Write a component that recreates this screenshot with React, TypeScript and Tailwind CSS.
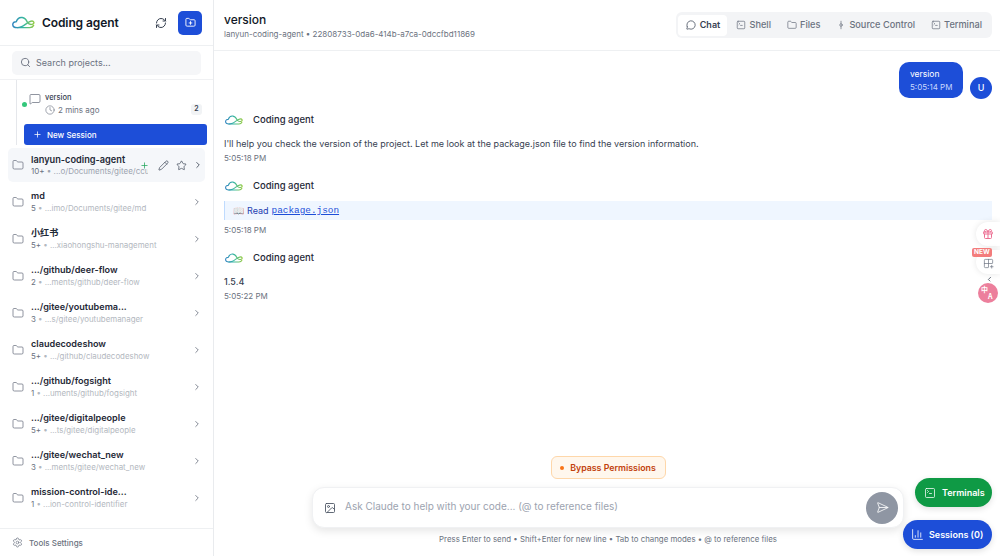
import { ChevronRight, Clock, Folder, FolderPlus, Image, MessageSquare, MessageCircle, Pencil, Plus, RefreshCw, Search, SendHorizontal, Settings, SquareTerminal, Star, GitCommitVertical, ChartColumn, Gift, Grid2x2Plus, ChevronLeft } from 'lucide-react';

const projects = [
  { name: 'md', count: '5', path: '...imo/Documents/gitee/md' },
  { name: '小红书', count: '5+', path: '...xiaohongshu-management' },
  { name: '.../github/deer-flow', count: '2', path: '...ments/github/deer-flow' },
  { name: '.../gitee/youtubema...', count: '3', path: '...s/gitee/youtubemanager' },
  { name: 'claudecodeshow', count: '5+', path: '.../github/claudecodeshow' },
  { name: '.../github/fogsight', count: '1', path: '...uments/github/fogsight' },
  { name: '.../gitee/digitalpeople', count: '5+', path: '...ts/gitee/digitalpeople' },
  { name: '.../gitee/wechat_new', count: '3', path: '...ments/gitee/wechat_new' },
  { name: 'mission-control-ide...', count: '1', path: '...ion-control-identifier' },
];

const tabs = [
  { label: 'Shell', icon: SquareTerminal },
  { label: 'Files', icon: Folder },
  { label: 'Source Control', icon: GitCommitVertical },
  { label: 'Terminal', icon: SquareTerminal },
];

function Logo({ className }: { className: string }) {
  return (
    <svg viewBox="0 0 36 20" fill="none" className={className}>
      <defs>
        <linearGradient id="cloud" x1="0" y1="0" x2="36" y2="0" gradientUnits="userSpaceOnUse">
          <stop offset="0" stopColor="#2f7fc1" />
          <stop offset="0.5" stopColor="#35b7a0" />
          <stop offset="1" stopColor="#9ccc3c" />
        </linearGradient>
      </defs>
      <path
        d="M8 18C3.5 18 1.2 15.6 1.2 13C1.2 10.4 3.6 8.6 6.6 8.8C8.2 4.2 12 1.6 16 2.2C20 2.8 22.5 6 24 9.5C26 12.5 28.5 13.5 31 13C33.5 12.5 34.8 11 34.2 9.5C33.4 7.8 30 7.6 27 9C22.5 11 19 15 15 16.5C12 17.6 9.5 18 8 18Z"
        stroke="url(#cloud)"
        strokeWidth="2.2"
        strokeLinejoin="round"
      />
      <path d="M8 18H28C30.5 18 32.8 16.8 33.8 14.5" stroke="url(#cloud)" strokeWidth="2.2" strokeLinecap="round" />
    </svg>
  );
}

function AgentHeader() {
  return (
    <div className="flex h-[16px] items-center gap-[10px] pl-[1px]">
      <Logo className="h-[10px] w-[18px]" />
      <span className="text-[9.5px] font-medium text-[#1f2937]">Coding agent</span>
    </div>
  );
}

export default function App() {
  return (
    <div className="relative flex h-[556px] w-[1000px] overflow-hidden bg-white font-['Inter',sans-serif] text-[#111827]">
      {/* Sidebar */}
      <aside className="flex w-[214px] shrink-0 flex-col border-r border-[#e9ebee] bg-white">
        <div className="flex h-[46px] shrink-0 items-center border-b border-[#eef0f2] pl-[12px] pr-[11px]">
          <Logo className="h-[13px] w-[23px]" />
          <span className="ml-[7px] flex-1 text-[12px] font-semibold tracking-[-0.1px] text-[#111827]">Coding agent</span>
          <RefreshCw className="mr-[11px] h-[12px] w-[12px] text-[#374151]" strokeWidth={2} />
          <div className="flex h-[24px] w-[24px] items-center justify-center rounded-[5px] bg-[#1d4ed8]">
            <FolderPlus className="h-[11px] w-[11px] text-white" strokeWidth={2} />
          </div>
        </div>

        <div className="flex h-[34px] shrink-0 items-center border-b border-[#f0f1f3] px-[12px]">
          <div className="flex h-[24px] w-full items-center gap-[5px] rounded-[5px] bg-[#f5f6f8] px-[8px]">
            <Search className="h-[11px] w-[11px] text-[#6b7280]" strokeWidth={2} />
            <span className="text-[9px] text-[#6b7280]">Search projects...</span>
          </div>
        </div>

        {/* Open project */}
        <div className="ml-[16px] mr-[6px] shrink-0 border-l border-[#e5e7eb] pt-[13px]">
          <div className="relative h-[31px] pl-[13px]">
            <span className="absolute left-[5px] top-[9px] h-[5px] w-[5px] rounded-full bg-[#34c77b]" />
            <MessageSquare className="absolute left-[12px] top-[0px] h-[12px] w-[12px] text-[#6b7280]" strokeWidth={1.5} />
            <div className="pl-[15px] text-[7.5px] font-medium leading-[10px] text-[#374151]">version</div>
            <div className="mt-[2px] flex items-center gap-[3px] pl-[15px] text-[8px] leading-[10px] text-[#6b7280]">
              <Clock className="h-[10px] w-[10px]" strokeWidth={1.5} />
              <span>2 mins ago</span>
            </div>
            <span className="absolute right-[5px] top-[11px] flex h-[11px] w-[11px] items-center justify-center rounded-[3px] bg-[#f1f3f5] text-[7px] font-semibold text-[#374151]">2</span>
          </div>
          <div className="ml-[7px] flex h-[21px] items-center gap-[5px] rounded-[3px] bg-[#1d4ed8] pl-[9px] text-[8px] font-medium text-white">
            <Plus className="h-[9px] w-[9px]" strokeWidth={2} />
            New Session
          </div>
        </div>

        {/* Projects */}
        <div className="mt-[3px] flex flex-1 flex-col">
          <div className="mx-[8px] flex h-[34px] items-center rounded-[5px] bg-[#f5f7fa] pl-[4px] pr-[6px]">
            <Folder className="h-[12px] w-[12px] shrink-0 text-[#6b7280]" strokeWidth={1.5} />
            <div className="ml-[7px] w-[117px] shrink-0 overflow-hidden whitespace-nowrap">
              <div className="text-[9.2px] font-semibold leading-[11px] text-[#1f2937]">lanyun-coding-agent</div>
              <div className="mt-[1.5px] text-[8px] leading-[10px] text-[#9ca3af]">
                <span className="text-[#6b7280]">10+</span> • ...o/Documents/gitee/ccui
              </div>
            </div>
            <Plus className="-ml-[8px] h-[9px] w-[9px] shrink-0 text-[#22a55b]" strokeWidth={2} />
            <Pencil className="ml-[9px] h-[11px] w-[11px] shrink-0 text-[#374151]" strokeWidth={1.5} />
            <Star className="ml-[7px] h-[11px] w-[11px] shrink-0 text-[#374151]" strokeWidth={1.5} />
            <ChevronRight className="ml-[6px] h-[10px] w-[10px] shrink-0 text-[#374151]" strokeWidth={2} />
          </div>
          <div className="mt-[1px]">
            {projects.map((p) => (
              <div key={p.name} className="flex h-[37px] items-center pl-[12px] pr-[11px]">
                <Folder className="h-[12px] w-[12px] shrink-0 text-[#6b7280]" strokeWidth={1.5} />
                <div className="ml-[7px] flex-1 whitespace-nowrap">
                  <div className="font-['Inter','Noto_Sans_CJK_SC',sans-serif] text-[9.1px] font-semibold leading-[11px] text-[#1f2937]">{p.name}</div>
                  <div className="mt-[1.5px] text-[7.9px] leading-[10px] text-[#b3b8c0]">
                    <span className="text-[#6b7280]">{p.count}</span> • {p.path}
                  </div>
                </div>
                <ChevronRight className="h-[10px] w-[10px] shrink-0 text-[#6b7280]" strokeWidth={2} />
              </div>
            ))}
          </div>
        </div>

        <div className="flex h-[28px] shrink-0 items-center gap-[6px] border-t border-[#eef0f2] pl-[12px] text-[8px] font-medium text-[#6b7280]">
          <Settings className="h-[11px] w-[11px]" strokeWidth={1.5} />
          Tools Settings
        </div>
      </aside>

      {/* Main */}
      <main className="flex min-w-0 flex-1 flex-col">
        <header className="flex h-[51px] shrink-0 items-center justify-between border-b border-[#eef0f2] pl-[10px] pr-[8px]">
          <div>
            <div className="text-[12px] font-medium leading-[15px] text-[#111827]">version</div>
            <div className="mt-[2px] text-[8px] leading-[10px] text-[#6b7280]">lanyun-coding-agent • 22808733-0da6-414b-a7ca-0dccfbd11869</div>
          </div>
          <div className="flex h-[26px] items-center gap-[16px] rounded-[6px] bg-[#f3f4f6] pl-[2px] pr-[10px]">
            <div className="-mr-[7px] flex h-[21px] w-[49px] items-center justify-center gap-[4px] rounded-[4px] bg-white text-[9px] font-semibold text-[#374151]">
              <MessageCircle className="h-[10px] w-[10px]" strokeWidth={1.75} />
              Chat
            </div>
            {tabs.map((t) => (
              <div key={t.label} className="flex h-[21px] items-center gap-[3px] text-[9.2px] font-medium text-[#6b7280]">
                <t.icon className="h-[10px] w-[10px]" strokeWidth={1.75} />
                {t.label}
              </div>
            ))}
          </div>
        </header>

        <div className="min-h-0 flex-1 pl-[10px] pr-[8px] pt-[11px]">
          <div className="flex justify-end gap-[7px]">
            <div className="h-[36px] w-[64px] rounded-[10px] bg-[#1d4ed8] pl-[11px] pt-[6px] text-white">
              <div className="text-[8.5px] leading-[12px]">version</div>
              <div className="mt-[2px] text-[8px] leading-[10px] text-[#c7d7fe]">5:05:14 PM</div>
            </div>
            <div className="mt-[15px] flex h-[22px] w-[22px] items-center justify-center rounded-full bg-[#1d4ed8] text-[9px] font-medium text-white">U</div>
          </div>

          <div className="mt-[13px]">
            <AgentHeader />
            <div className="mt-[10px] text-[9px] leading-[12px] text-[#374151]">I'll help you check the version of the project. Let me look at the package.json file to find the version information.</div>
            <div className="mt-[3px] text-[8px] leading-[10px] text-[#6b7280]">5:05:18 PM</div>
          </div>

          <div className="mt-[15px]">
            <AgentHeader />
            <div className="mt-[7px] flex h-[19px] items-center gap-[3px] border-l border-[#bfdbfe] bg-[#eff6ff] pl-[8px] text-[9px] text-[#1e40af]">
              <span className="text-[9px] text-[#4b5563]">📖</span>
              Read
              <span className="mt-[1px] font-['Liberation_Mono',monospace] text-[9.4px] text-[#1d4ed8] underline">package.json</span>
            </div>
            <div className="mt-[5px] text-[8px] leading-[10px] text-[#6b7280]">5:05:18 PM</div>
          </div>

          <div className="mt-[15px]">
            <AgentHeader />
            <div className="mt-[10px] text-[9px] leading-[12px] font-medium text-[#374151]">1.5.4</div>
            <div className="mt-[3px] text-[8px] leading-[10px] text-[#6b7280]">5:05:22 PM</div>
          </div>
        </div>

        {/* Composer */}
        <div className="shrink-0 pl-[98px] pr-[96px]">
          <div className="flex justify-center">
            <div className="flex h-[23px] w-[115px] items-center justify-center gap-[6px] rounded-[6px] border border-[#fed7aa] bg-[#fff7ed] text-[8.8px] font-semibold text-[#c2410c]">
              <span className="h-[4px] w-[4px] rounded-full bg-[#f97316]" />
              Bypass Permissions
            </div>
          </div>
          <div className="mt-[8px] flex h-[41px] items-center rounded-[12px] border border-[#f0f1f3] bg-white pl-[11px] pr-[5px] shadow-[0_3px_8px_rgba(0,0,0,0.10)]">
            <Image className="h-[12px] w-[12px] text-[#4b5563]" strokeWidth={1.75} />
            <span className="mb-[2px] ml-[9px] flex-1 text-[10px] text-[#9ca3af]">Ask Claude to help with your code... (@ to reference files)</span>
            <div className="flex h-[32px] w-[32px] items-center justify-center rounded-full bg-[#8f96a3]">
              <SendHorizontal className="h-[13px] w-[13px] text-white" strokeWidth={1.5} />
            </div>
          </div>
          <div className="mt-[6px] h-[22px] text-center text-[7.85px] leading-[10px] text-[#6b7280]">Press Enter to send • Shift+Enter for new line • Tab to change modes • @ to reference files</div>
        </div>
      </main>

      {/* Floating buttons */}
      <div className="absolute left-[915px] top-[478px] flex h-[29px] w-[77px] items-center gap-[6px] rounded-full bg-[#0f9a45] pl-[9px] text-[9px] font-semibold text-white shadow-[0_2px_6px_rgba(0,0,0,0.12)]">
        <SquareTerminal className="h-[12px] w-[12px]" strokeWidth={1.5} />
        Terminals
      </div>
      <div className="absolute left-[903px] top-[520px] flex h-[29px] w-[89px] items-center gap-[5px] rounded-full bg-[#1d4ed8] pl-[8px] text-[9px] font-semibold text-white shadow-[0_2px_6px_rgba(0,0,0,0.12)]">
        <ChartColumn className="h-[13px] w-[13px]" strokeWidth={1.5} />
        Sessions (0)
      </div>

      {/* Browser extension dock */}
      <div className="absolute left-[976px] top-[222px] flex h-[24px] w-[24px] items-center justify-center rounded-l-full bg-white shadow-[0_0_6px_rgba(0,0,0,0.10)]">
        <Gift className="h-[12px] w-[12px] text-[#ec6f93]" strokeWidth={2} />
      </div>
      <div className="absolute left-[976px] top-[250px] flex h-[24px] w-[24px] items-center justify-center rounded-l-full bg-white shadow-[0_0_6px_rgba(0,0,0,0.10)]">
        <Grid2x2Plus className="mt-[3px] h-[11px] w-[11px] text-[#6b7280]" strokeWidth={1.5} />
      </div>
      <div className="absolute left-[972px] top-[248px] rounded-[2px] bg-[#f37c7c] px-[2px] text-[6.5px] font-bold leading-[9px] text-white">NEW</div>
      <ChevronLeft className="absolute left-[985px] top-[275px] h-[9px] w-[9px] text-[#374151]" strokeWidth={2} />
      <div className="absolute left-[978px] top-[283px] h-[20px] w-[20px] rounded-full bg-[#ec7f9c] font-['Noto_Sans_CJK_SC',sans-serif] font-bold text-white shadow-[0_0_0_2px_white]">
        <span className="absolute left-[3px] top-[2px] text-[7px] leading-[8px]">中</span>
        <span className="absolute left-[10px] top-[9px] text-[7px] leading-[8px]">A</span>
      </div>
    </div>
  );
}
